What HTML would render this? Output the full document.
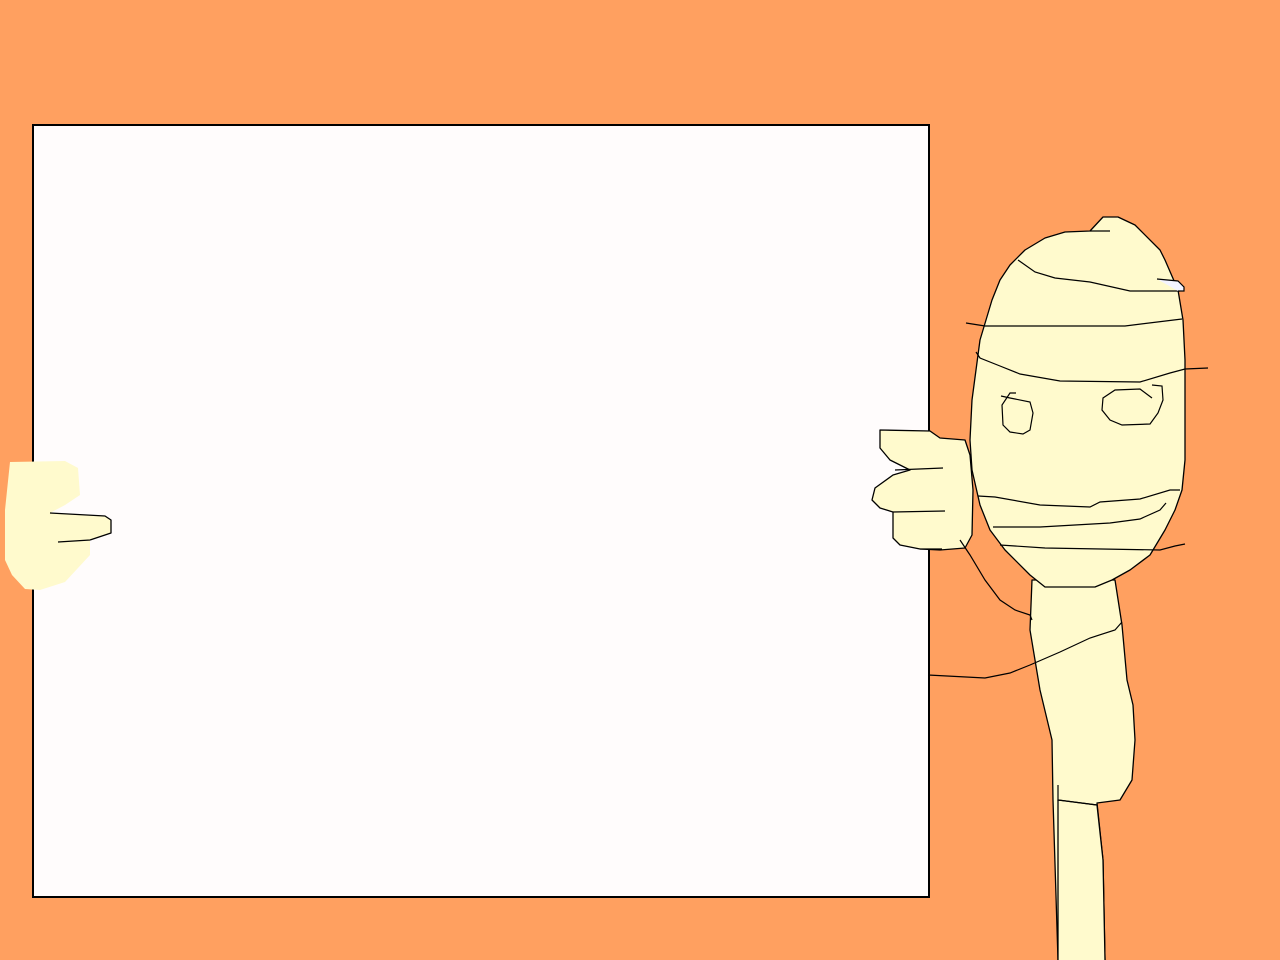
<!DOCTYPE html>
<html><head><meta charset="utf-8"><style>html,body{margin:0;padding:0;background:#FFA060;}svg{display:block}</style></head>
<body>
<svg width="1280" height="960" viewBox="0 0 1280 960" xmlns="http://www.w3.org/2000/svg">
<rect width="1280" height="960" fill="#FFA060"/>
<rect x="33" y="125" width="896" height="772" fill="#FFFCFC" stroke="#000" stroke-width="2"/>
<g fill="#FFFACD" stroke="#000" stroke-width="1.3" stroke-linejoin="round">
<!-- left hand -->
<path d="M10 462 L65 461 L78 468 L80 495 L65 505 L50 513 L105 516 L111 520 L111 533 L90 540 L90 555 L65 582 L40 590 L25 589 L12 575 L5 560 L5 510 Z" stroke="none"/>
<path d="M50 513 L105 516 L111 520 L111 533 L90 540 M58 542 L90 540" fill="none"/>
<!-- neck/body -->
<path d="M1032 580 L1030 630 L1040 690 L1052 740 L1053 800 L1058 960 L1105 960 L1103 860 L1097 803 L1120 800 L1132 780 L1135 740 L1133 705 L1127 680 L1122 625 L1115 580 Z"/>
<path d="M1058 960 L1058 800 L1097 805 L1103 860 L1105 960" fill="#FFFACD"/>
<!-- head -->
<path d="M1103 217 L1118 217 L1135 225 L1160 250 L1165 260 L1178 290 L1183 320 L1185 360 L1185 460 L1182 490 L1175 510 L1165 530 L1150 555 L1130 570 L1112 580 L1095 587 L1045 587 L1030 575 L1005 550 L990 530 L980 505 L972 470 L970 440 L972 400 L980 340 L992 300 L1000 280 L1010 265 L1025 250 L1045 238 L1065 232 L1090 231 Z"/>
<!-- right hand -->
<path d="M880 430 L930 431 L940 438 L965 440 L970 455 L973 490 L972 535 L965 548 L940 550 L920 549 L900 545 L893 538 L893 512 L880 508 L872 500 L875 488 L893 475 L910 470 L890 460 L880 448 Z"/>
</g>
<g fill="none" stroke="#000" stroke-width="1.2">
<path d="M1090 231 L1110 231"/>
<path d="M1018 260 L1035 272 L1055 278 L1090 282 L1130 291 L1180 291"/>
<path d="M1157 279 L1178 281 L1184 287 L1184 291 L1178 291" fill="#F4F4FF"/>
<path d="M966 323 L985 326 L1125 326 L1182 319"/>
<path d="M976 352 L980 358 L1000 366 L1020 374 L1060 381 L1140 382 L1170 373 L1185 369 L1208 368"/>
<path d="M1001 396 L1010 398 L1030 402 L1033 413 L1030 430 L1023 434 L1010 432 L1003 425 L1002 405 L1010 393 L1016 393"/>
<path d="M1152 385 L1162 386 L1163 400 L1158 413 L1150 424 L1122 425 L1110 420 L1102 410 L1103 398 L1115 390 L1140 389 L1152 398"/>
<path d="M978 496 L995 497 L1040 505 L1090 507 L1100 502 L1140 499 L1170 490 L1180 490"/>
<path d="M993 527 L1040 527 L1110 523 L1140 519 L1160 510 L1166 503"/>
<path d="M1000 545 L1045 548 L1160 550 L1175 546 L1185 544"/>
<path d="M960 540 L970 555 L985 580 L1000 600 L1015 610 L1030 615 L1032 620"/>
<path d="M928 675 L985 678 L1010 673 L1030 665 L1060 652 L1090 638 L1115 630 L1122 622"/>
<path d="M943 468 L895 470 M945 511 L893 512 M942 549 L920 549"/>
<path d="M1058 785 L1058 800 L1097 805"/>
</g>
</svg>
</body></html>
